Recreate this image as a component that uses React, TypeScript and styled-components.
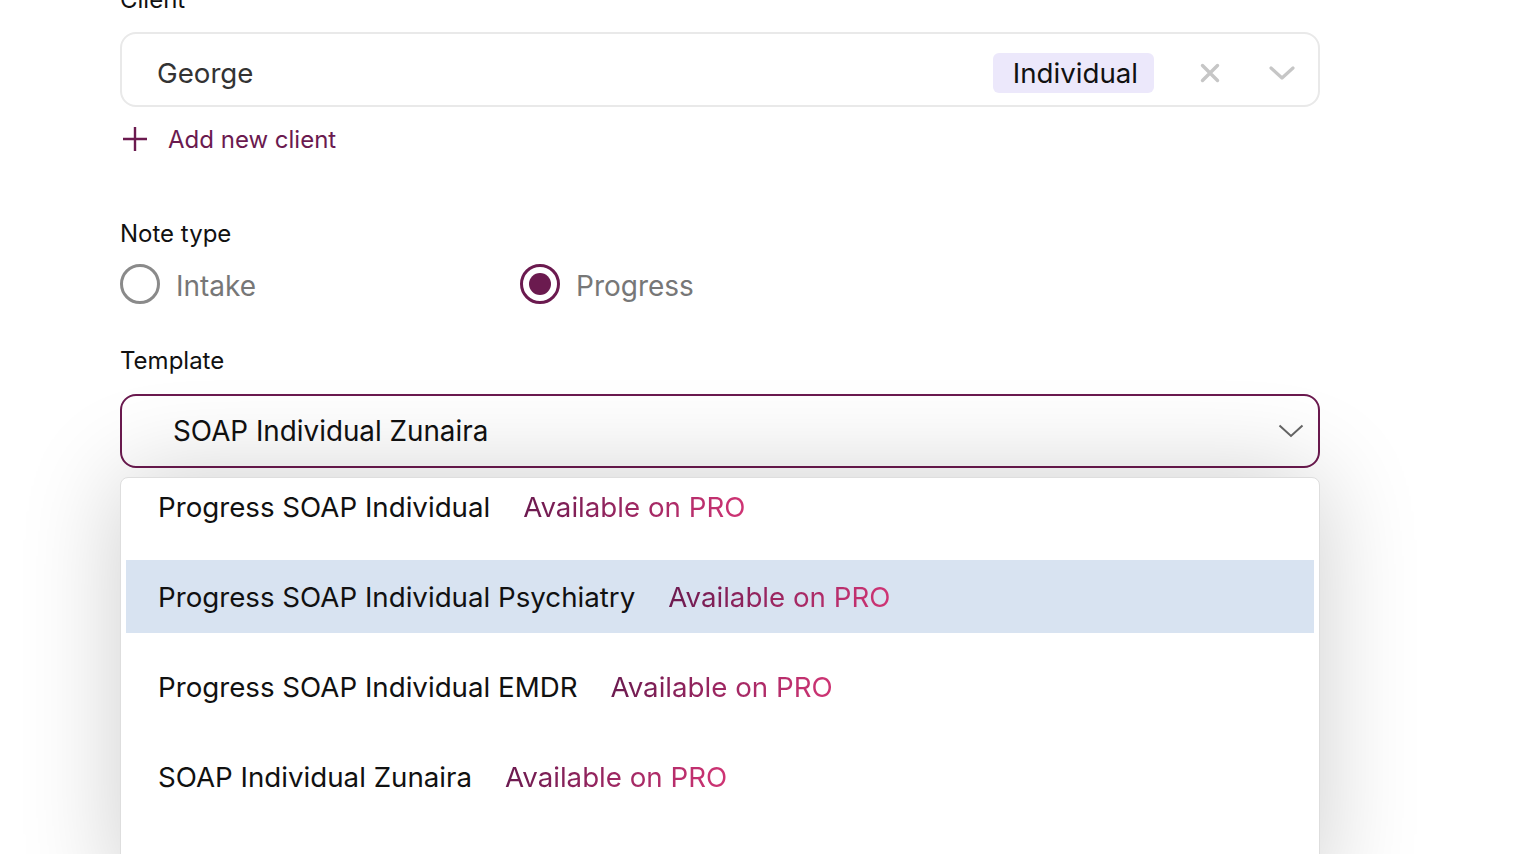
import { useState } from "react";
import styled, { createGlobalStyle } from "styled-components";

const GlobalStyle = createGlobalStyle`
  html, body {
    margin: 0;
    padding: 0;
    background: #ffffff;
    overflow: hidden;
  }
  body {
    font-family: Inter, "Liberation Sans", sans-serif;
    color: #111;
  }
`;

const templates = [
  "Progress SOAP Individual",
  "Progress SOAP Individual Psychiatry",
  "Progress SOAP Individual EMDR",
  "SOAP Individual Zunaira",
];

export default function App() {
  const [noteType, setNoteType] = useState("progress");
  const [hovered, setHovered] = useState(1);

  return (
    <>
      <GlobalStyle />
      <Page>
        <Label>Client</Label>
        <ClientSelect>
          <ClientValue>George</ClientValue>
          <Badge>Individual</Badge>
          <IconSlot $w={20} $gap={46}>
            <svg width="20" height="20" viewBox="0 0 20 20">
              <path
                d="M2.5 2.5 L17.5 17.5 M17.5 2.5 L2.5 17.5"
                stroke="#c6c6c6"
                strokeWidth="3.4"
                strokeLinecap="round"
              />
            </svg>
          </IconSlot>
          <IconSlot $w={26} $gap={49}>
            <svg width="26" height="14" viewBox="0 0 26 14">
              <path
                d="M2 2 L13 12 L24 2"
                stroke="#c6c6c6"
                strokeWidth="3.2"
                fill="none"
                strokeLinecap="round"
                strokeLinejoin="round"
              />
            </svg>
          </IconSlot>
        </ClientSelect>

        <AddClient>
          <svg width="26" height="26" viewBox="0 0 26 26">
            <path
              d="M13 1 V25 M1 13 H25"
              stroke="#6b1a4f"
              strokeWidth="2.4"
            />
          </svg>
          <span>Add new client</span>
        </AddClient>

        <Label $top={66}>Note type</Label>
        <RadioRow>
          <RadioOption onClick={() => setNoteType("intake")}>
            <RadioCircle $checked={noteType === "intake"} />
            <RadioText>Intake</RadioText>
          </RadioOption>
          <RadioOption onClick={() => setNoteType("progress")}>
            <RadioCircle $checked={noteType === "progress"} />
            <RadioText>Progress</RadioText>
          </RadioOption>
        </RadioRow>

        <Label $top={42}>Template</Label>
        <TemplateSelect>
          <TemplateValue>SOAP Individual Zunaira</TemplateValue>
          <svg width="26" height="14" viewBox="0 0 26 14">
            <path
              d="M1.5 1.5 L13 12 L24.5 1.5"
              stroke="#666"
              strokeWidth="2"
              fill="none"
            />
          </svg>
        </TemplateSelect>

        <Menu>
          <MenuList>
            {templates.map((t, i) => (
              <MenuItem
                key={t}
                $active={hovered === i}
                onMouseEnter={() => setHovered(i)}
              >
                <span>{t}</span>
                <Pro>Available on PRO</Pro>
              </MenuItem>
            ))}
          </MenuList>
        </Menu>
      </Page>
    </>
  );
}

const Page = styled.div`
  width: 1200px;
  margin: -15px 0 0 120px;
  display: flex;
  flex-direction: column;
`;

const Label = styled.div<{ $top?: number }>`
  margin-top: ${(p) => p.$top || 0}px;
  font-size: 24px;
  line-height: 30px;
  color: #111;
`;

const ClientSelect = styled.div`
  margin-top: 17px;
  height: 75px;
  box-sizing: border-box;
  border: 2px solid #e9e9e9;
  border-radius: 16px;
  display: flex;
  align-items: center;
  padding: 6px 23px 0 35px;
`;

const ClientValue = styled.div`
  flex: 1;
  font-size: 27.7px;
  color: #333;
`;

const Badge = styled.div`
  height: 40px;
  display: flex;
  align-items: center;
  padding: 0 16px 0 20px;
  border-radius: 6px;
  background: #ece8fb;
  font-size: 27.7px;
  color: #111;
`;

const IconSlot = styled.div<{ $w: number; $gap: number }>`
  width: ${(p) => p.$w}px;
  margin-left: ${(p) => p.$gap}px;
  display: flex;
  justify-content: center;
  align-items: center;
`;

const AddClient = styled.div`
  margin-top: 18px;
  height: 28px;
  display: flex;
  align-items: center;
  gap: 20px;
  color: #6b1a4f;
  font-size: 24px;
  padding-left: 2px;
  cursor: pointer;
`;

const RadioRow = styled.div`
  margin-top: 15px;
  display: flex;
`;

const RadioOption = styled.label`
  width: 400px;
  display: flex;
  align-items: center;
  gap: 16px;
  cursor: pointer;
`;

const RadioCircle = styled.span<{ $checked: boolean }>`
  width: 40px;
  height: 40px;
  flex-shrink: 0;
  box-sizing: border-box;
  border-radius: 50%;
  border: 3px solid ${(p) => (p.$checked ? "#6b1a4f" : "#8a8a8a")};
  display: flex;
  align-items: center;
  justify-content: center;
  &::after {
    content: "";
    width: 22px;
    height: 22px;
    border-radius: 50%;
    background: #6b1a4f;
    display: ${(p) => (p.$checked ? "block" : "none")};
  }
`;

const RadioText = styled.span`
  font-size: 28px;
  color: #777;
  padding-top: 3px;
`;

const TemplateSelect = styled.div`
  margin-top: 18px;
  height: 74px;
  box-sizing: border-box;
  border: 2px solid #6b1a4f;
  border-radius: 16px;
  display: flex;
  align-items: center;
  justify-content: space-between;
  padding: 0 14px 0 51px;
`;

const TemplateValue = styled.div`
  font-size: 27.8px;
  color: #111;
`;

const Menu = styled.div`
  margin-top: 9px;
  height: 420px;
  box-sizing: border-box;
  border: 1px solid #dedede;
  border-radius: 8px;
  background: #fff;
  overflow: hidden;
  box-shadow: 0 0 100px rgba(0, 0, 0, 0.2);
`;

const MenuList = styled.div`
  margin-top: -8px;
  padding: 0 5px;
  display: flex;
  flex-direction: column;
  gap: 17px;
`;

const MenuItem = styled.div<{ $active: boolean }>`
  height: 73px;
  display: flex;
  align-items: center;
  gap: 33px;
  padding-left: 32px;
  font-size: 27.7px;
  color: #111;
  background: ${(p) => (p.$active ? "#d8e3f1" : "transparent")};
`;

const Pro = styled.span`
  background: linear-gradient(90deg, #6b1a4f 0%, #cf3474 100%);
  -webkit-background-clip: text;
  background-clip: text;
  color: transparent;
`;
